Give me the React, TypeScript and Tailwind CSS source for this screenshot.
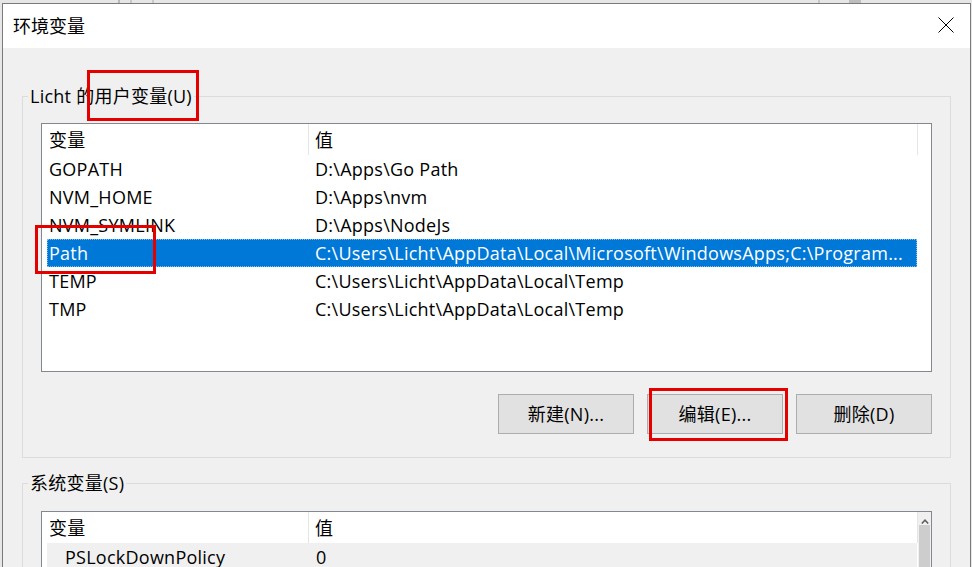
import React from 'react';

type Row = { name: string; value: string; selected?: boolean };

const userVars: Row[] = [
  { name: 'GOPATH', value: 'D:\\Apps\\Go Path' },
  { name: 'NVM_HOME', value: 'D:\\Apps\\nvm' },
  { name: 'NVM_SYMLINK', value: 'D:\\Apps\\NodeJs' },
  {
    name: 'Path',
    value: 'C:\\Users\\Licht\\AppData\\Local\\Microsoft\\WindowsApps;C:\\Program...',
    selected: true,
  },
  { name: 'TEMP', value: 'C:\\Users\\Licht\\AppData\\Local\\Temp' },
  { name: 'TMP', value: 'C:\\Users\\Licht\\AppData\\Local\\Temp' },
];

const ListHeader = () => (
  <div className="flex h-[31px] w-[876px] shrink-0 items-center border-r border-[#e5e5e5] bg-white">
    <div className="flex h-full w-[267px] items-center border-r border-[#e5e5e5] pl-[7px]">变量</div>
    <div className="pl-[6px]">值</div>
  </div>
);

const VarRow = ({ row }: { row: Row }) => (
  <div
    className={
      row.selected
        ? 'flex h-[28px] w-[870px] items-center whitespace-nowrap bg-[#0078d7] text-white outline-1 -outline-offset-1 outline-dotted outline-[#7fbcec]'
        : 'flex h-[28px] w-[870px] items-center whitespace-nowrap'
    }
  >
    <div className="w-[261px] overflow-hidden pl-[2px]">{row.name}</div>
    <div className="overflow-hidden pl-[7px]">{row.value}</div>
  </div>
);

const Button = ({ label }: { label: string }) => (
  <button className="flex h-[40px] w-[136px] items-center justify-center border border-[#adadad] bg-[#e1e1e1] text-black">
    {label}
  </button>
);

export default function App() {
  return (
    <div className="relative h-[567px] w-[972px] overflow-hidden bg-[#e6e6e6] font-['Open_Sans','Noto_Sans_CJK_SC',sans-serif] text-[18px] leading-[24px] tracking-[0.25px] text-black">
      {/* strip of the window behind */}
      <div className="flex h-[3px]">
        <div className="ml-[118px] w-[2px] bg-[#b9b9b9]" />
        <div className="ml-[10px] w-[2px] bg-[#c8c8c8]" />
        <div className="ml-[20px] w-[2px] bg-[#c8c8c8]" />
        <div className="ml-[664px] w-[2px] bg-[#c8c8c8]" />
        <div className="ml-[29px] w-[12px] bg-[#bdbdbd]" />
      </div>

      <div className="ml-[2px] flex h-[600px] w-[969px] flex-col border border-[#7a7a7a] bg-[#f0f0f0]">
        <div className="flex h-[44px] shrink-0 items-center justify-between bg-white pl-[10px] pr-[16px]">
          <span className="tracking-normal">环境变量</span>
          <svg width="16" height="16" viewBox="0 0 16 16" className="mb-[2px]">
            <path d="M0.5 0.5 L15.5 15.5 M15.5 0.5 L0.5 15.5" stroke="#000" strokeWidth="1" fill="none" />
          </svg>
        </div>

        <div className="flex flex-col px-[19px] pt-[36px]">
          <fieldset className="border border-[#dcdcdc]">
            <legend className="ml-[5px] px-[2px]">Licht 的用户变量(U)</legend>
            <div className="flex flex-col px-[18px] pb-[23px] pt-[15px]">
              <div className="flex h-[249px] border border-[#828790] bg-white">
                <div className="flex w-[876px] flex-col">
                  <ListHeader />
                  <div className="flex flex-col pl-[5px]">
                    {userVars.map((r) => (
                      <VarRow key={r.name} row={r} />
                    ))}
                  </div>
                </div>
              </div>
              <div className="mt-[22px] flex justify-end gap-[13px]">
                <Button label="新建(N)..." />
                <Button label="编辑(E)..." />
                <Button label="删除(D)" />
              </div>
            </div>
          </fieldset>

          <fieldset className="mt-[13px] border border-[#dcdcdc]">
            <legend className="ml-[5px] px-[2px]">系统变量(S)</legend>
            <div className="flex flex-col px-[18px] pt-[16px]">
              <div className="flex h-[200px] border border-[#828790] bg-white">
                <div className="flex w-[876px] flex-col">
                  <ListHeader />
                  <div className="flex flex-col pl-[5px]">
                    <div className="flex h-[28px] w-[870px] items-center whitespace-nowrap bg-[#f0f0f0]">
                      <div className="w-[261px] pl-[18px]">PSLockDownPolicy</div>
                      <div className="pl-[8px]">0</div>
                    </div>
                  </div>
                </div>
                <div className="flex w-[13px] flex-col bg-[#f0f0f0]">
                  <div className="flex h-[12px] shrink-0 items-end justify-center">
                    <svg width="8" height="5" viewBox="0 0 8 5">
                      <path d="M0.8 4.5 L4 1.2 L7.2 4.5" stroke="#606060" strokeWidth="1.6" fill="none" />
                    </svg>
                  </div>
                  <div className="ml-[1px] mt-[1px] w-[11px] flex-1 bg-[#cdcdcd]" />
                </div>
              </div>
            </div>
          </fieldset>
        </div>
      </div>

      {/* red annotation boxes */}
      <div className="absolute left-[87px] top-[70px] h-[51px] w-[112px] border-[3px] border-[#e50000]" />
      <div className="absolute left-[35px] top-[225px] h-[49px] w-[121px] border-[3px] border-[#e50000]" />
      <div className="absolute left-[649px] top-[388px] h-[53px] w-[139px] border-[3px] border-[#e50000]" />
    </div>
  );
}
